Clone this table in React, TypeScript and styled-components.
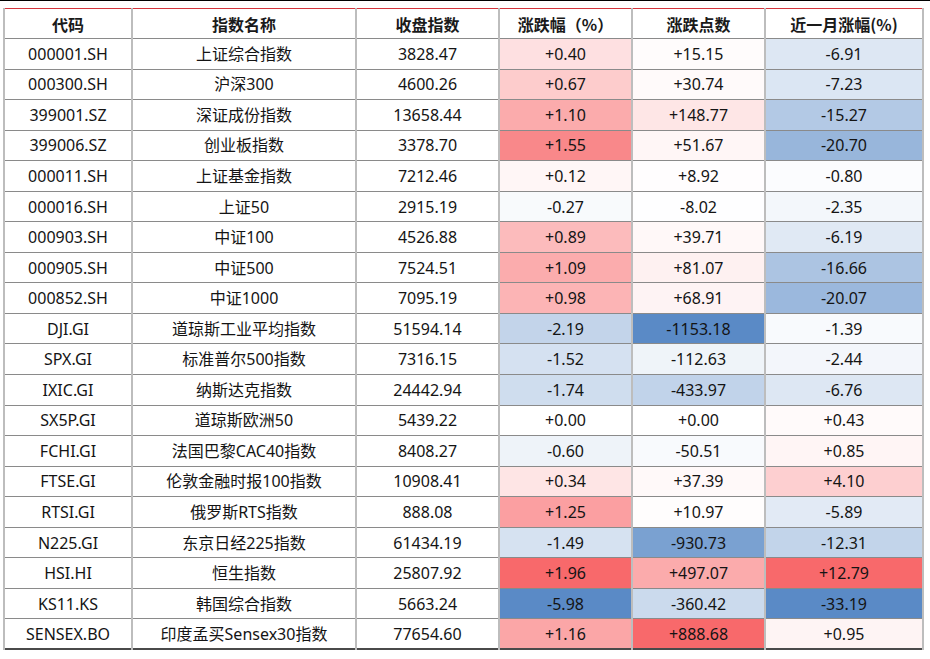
import React from 'react';
import styled, { createGlobalStyle } from 'styled-components';

// ── Global ────────────────────────────────────────────────────
const GlobalStyle = createGlobalStyle`
  html, body { margin: 0; padding: 0; background: #fff; }
  body {
    font-family: "Noto Sans", "Noto Sans CJK SC", sans-serif;
    color: #141414;
  }
`;

// ── Styled Components ─────────────────────────────────────────
const Page = styled.main`
  width: 930px;
  height: 659px;
  overflow: hidden;
`;

const TopRule = styled.div`
  height: 1px;
  background: #000;
  margin-bottom: 7px;
`;

const Frame = styled.section`
  padding-left: 3px;
`;

const Table = styled.table`
  border-collapse: collapse;
  table-layout: fixed;
  border-top: 1px solid #d4343c;
  border-bottom: 2px solid #4a4a4a;
  font-size: 16px;
`;

const HeadCell = styled.th<{ $w: number }>`
  width: ${({ $w }) => $w}px;
  height: 29px;
  padding: 0;
  font-weight: 700;
  font-family: "Noto Sans CJK SC", "Noto Sans", sans-serif;
  color: #1a1a1a;
  text-align: center;
  border-left: 2px solid #bdbdbd;
  border-right: 2px solid #bdbdbd;
  border-bottom: 1px solid #8a8a8a;
`;

const Row = styled.tr`
  height: 30.55px;
`;

const Cell = styled.td<{ $bg?: string }>`
  padding: 0;
  text-align: center;
  white-space: nowrap;
  line-height: 1;
  background: ${({ $bg }) => $bg || '#fff'};
  border-left: 2px solid #bdbdbd;
  border-right: 2px solid #bdbdbd;
  border-bottom: 1px solid #8a8a8a;
`;

// ── Data ──────────────────────────────────────────────────────
// column widths measured between grid lines, less the border share
const headers: [string, number][] = [
  ['代码', 126],
  ['指数名称', 222],
  ['收盘指数', 141],
  ['涨跌幅（%）', 131],
  ['涨跌点数', 131],
  ['近一月涨幅(%)', 156],
];

const rows: string[][] = [
  ['000001.SH', '上证综合指数', '3828.47', '+0.40', '+15.15', '-6.91'],
  ['000300.SH', '沪深300', '4600.26', '+0.67', '+30.74', '-7.23'],
  ['399001.SZ', '深证成份指数', '13658.44', '+1.10', '+148.77', '-15.27'],
  ['399006.SZ', '创业板指数', '3378.70', '+1.55', '+51.67', '-20.70'],
  ['000011.SH', '上证基金指数', '7212.46', '+0.12', '+8.92', '-0.80'],
  ['000016.SH', '上证50', '2915.19', '-0.27', '-8.02', '-2.35'],
  ['000903.SH', '中证100', '4526.88', '+0.89', '+39.71', '-6.19'],
  ['000905.SH', '中证500', '7524.51', '+1.09', '+81.07', '-16.66'],
  ['000852.SH', '中证1000', '7095.19', '+0.98', '+68.91', '-20.07'],
  ['DJI.GI', '道琼斯工业平均指数', '51594.14', '-2.19', '-1153.18', '-1.39'],
  ['SPX.GI', '标准普尔500指数', '7316.15', '-1.52', '-112.63', '-2.44'],
  ['IXIC.GI', '纳斯达克指数', '24442.94', '-1.74', '-433.97', '-6.76'],
  ['SX5P.GI', '道琼斯欧洲50', '5439.22', '+0.00', '+0.00', '+0.43'],
  ['FCHI.GI', '法国巴黎CAC40指数', '8408.27', '-0.60', '-50.51', '+0.85'],
  ['FTSE.GI', '伦敦金融时报100指数', '10908.41', '+0.34', '+37.39', '+4.10'],
  ['RTSI.GI', '俄罗斯RTS指数', '888.08', '+1.25', '+10.97', '-5.89'],
  ['N225.GI', '东京日经225指数', '61434.19', '-1.49', '-930.73', '-12.31'],
  ['HSI.HI', '恒生指数', '25807.92', '+1.96', '+497.07', '+12.79'],
  ['KS11.KS', '韩国综合指数', '5663.24', '-5.98', '-360.42', '-33.19'],
  ['SENSEX.BO', '印度孟买Sensex30指数', '77654.60', '+1.16', '+888.68', '+0.95'],
];

// ── Colour scale (red → white → blue, like a spreadsheet) ─────
const RED = [248, 105, 107];
const BLUE = [90, 138, 198];

const mix = (to: number[], t: number) =>
  `rgb(${to.map((c) => Math.round(255 - t * (255 - c))).join(',')})`;

const scaleFor = (col: number) => {
  const vals = rows.map((r) => parseFloat(r[col]));
  const max = Math.max(...vals);
  const min = Math.min(...vals);
  return (v: number) => {
    if (v > 0) return mix(RED, v / max);
    if (v < 0) return mix(BLUE, v / min);
    return '#fff';
  };
};

const scales: Record<number, (v: number) => string> = {
  3: scaleFor(3),
  4: scaleFor(4),
  5: scaleFor(5),
};

// ── Component ─────────────────────────────────────────────────
export default function App() {
  return (
    <Page>
      <GlobalStyle />
      <TopRule />
      <Frame>
        <Table>
          <thead>
            <tr>
              {headers.map(([h, w]) => (
                <HeadCell key={h} $w={w}>{h}</HeadCell>
              ))}
            </tr>
          </thead>
          <tbody>
            {rows.map((r) => (
              <Row key={r[0]}>
                {r.map((v, i) => (
                  <Cell key={i} $bg={scales[i] ? scales[i](parseFloat(v)) : undefined}>
                    {v}
                  </Cell>
                ))}
              </Row>
            ))}
          </tbody>
        </Table>
      </Frame>
    </Page>
  );
}
